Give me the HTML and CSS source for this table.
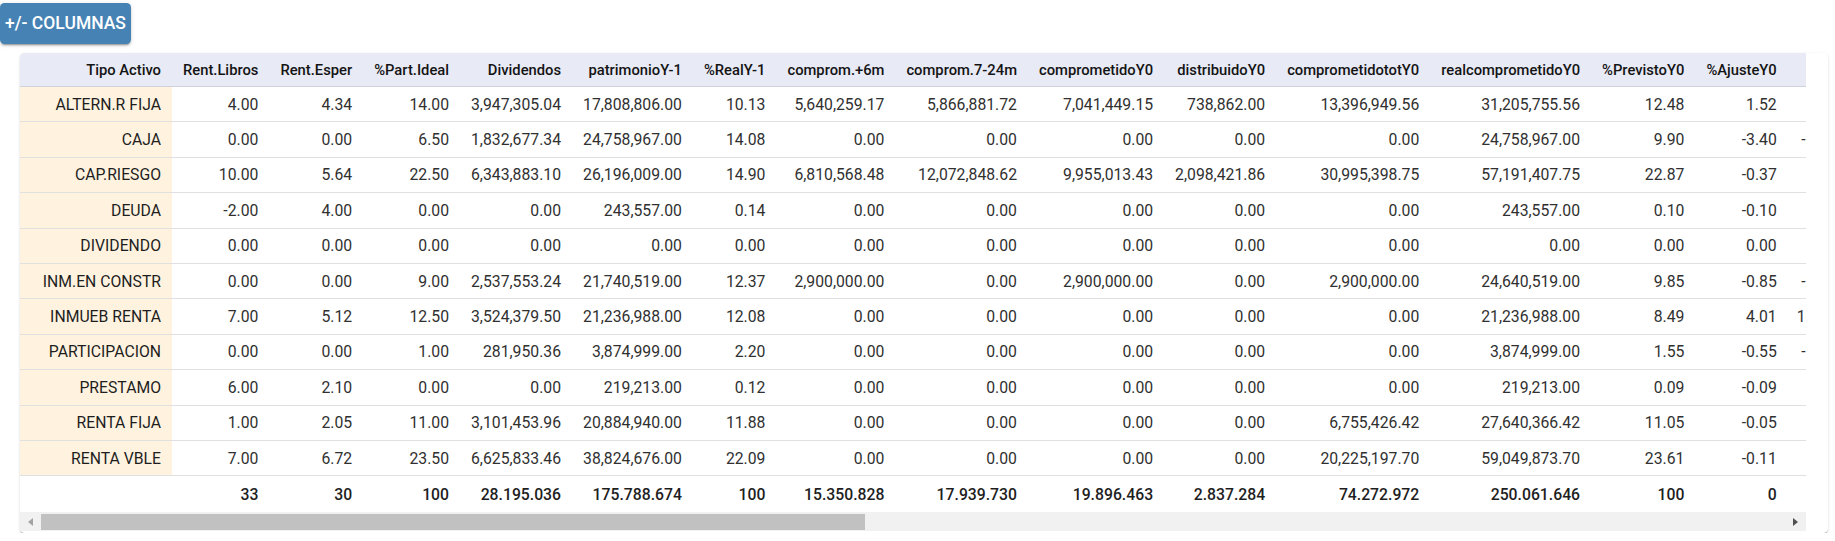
FILE: index.html
```html
<!DOCTYPE html>
<html lang="es">
<head>
<meta charset="utf-8">
<title>Tipo Activo</title>
<link rel="stylesheet" href="styles.css">
</head>
<body>
<div class="page">
  <button class="btn-cols" type="button">+/- Columnas</button>
  <div class="card">
    <div class="grid-scroll">
      <table class="grid">
        <thead>
          <tr>
            <th class="tipo-h">Tipo Activo</th><th>Rent.Libros</th><th>Rent.Esper</th><th>%Part.Ideal</th><th>Dividendos</th><th>patrimonioY-1</th><th>%RealY-1</th><th>comprom.+6m</th><th>comprom.7-24m</th><th>comprometidoY0</th><th>distribuidoY0</th><th>comprometidototY0</th><th>realcomprometidoY0</th><th>%PrevistoY0</th><th>%AjusteY0</th><th>ajusteY0</th><th>previstoY1</th><th>comprometidoY1</th><th>distribuidoY1</th><th>comprometidototY1</th><th>realcomprometidoY1</th><th>%PrevistoY1</th><th>%AjusteY1</th><th>ajusteY1</th><th>previstoY2</th><th>comprometidoY2</th><th>distribuidoY2</th><th>realcomprometidoY2</th><th>%PrevistoY2</th><th>%AjusteY2</th>
          </tr>
        </thead>
        <tbody>
          <tr><td class="tipo">ALTERN.R FIJA</td><td>4.00</td><td>4.34</td><td>14.00</td><td>3,947,305.04</td><td>17,808,806.00</td><td>10.13</td><td>5,640,259.17</td><td>5,866,881.72</td><td>7,041,449.15</td><td>738,862.00</td><td>13,396,949.56</td><td>31,205,755.56</td><td>12.48</td><td>1.52</td><td>3,812,440.12</td><td>33,412,980.00</td><td>4,120,000.00</td><td>812,748.20</td><td>9,276,949.56</td><td>35,325,755.56</td><td>12.90</td><td>1.10</td><td>2,887,215.40</td><td>34,102,700.00</td><td>2,600,000.00</td><td>894,023.02</td><td>36,130,412.14</td><td>13.10</td><td>0.90</td></tr>
          <tr><td class="tipo">CAJA</td><td>0.00</td><td>0.00</td><td>6.50</td><td>1,832,677.34</td><td>24,758,967.00</td><td>14.08</td><td>0.00</td><td>0.00</td><td>0.00</td><td>0.00</td><td>0.00</td><td>24,758,967.00</td><td>9.90</td><td>-3.40</td><td>-8,418,049.00</td><td>16,340,918.00</td><td>0.00</td><td>0.00</td><td>0.00</td><td>16,340,918.00</td><td>6.50</td><td>0.00</td><td>0.00</td><td>16,340,918.00</td><td>0.00</td><td>0.00</td><td>16,340,918.00</td><td>6.50</td><td>0.00</td></tr>
          <tr><td class="tipo">CAP.RIESGO</td><td>10.00</td><td>5.64</td><td>22.50</td><td>6,343,883.10</td><td>26,196,009.00</td><td>14.90</td><td>6,810,568.48</td><td>12,072,848.62</td><td>9,955,013.43</td><td>2,098,421.86</td><td>30,995,398.75</td><td>57,191,407.75</td><td>22.87</td><td>-0.37</td><td>-948,118.52</td><td>56,243,289.23</td><td>7,250,000.00</td><td>2,308,264.05</td><td>23,745,398.75</td><td>64,441,407.75</td><td>22.50</td><td>0.00</td><td>0.00</td><td>57,930,112.40</td><td>5,100,000.00</td><td>2,539,090.45</td><td>66,204,117.36</td><td>22.50</td><td>0.00</td></tr>
          <tr><td class="tipo">DEUDA</td><td>-2.00</td><td>4.00</td><td>0.00</td><td>0.00</td><td>243,557.00</td><td>0.14</td><td>0.00</td><td>0.00</td><td>0.00</td><td>0.00</td><td>0.00</td><td>243,557.00</td><td>0.10</td><td>-0.10</td><td>-24,355.70</td><td>0.00</td><td>0.00</td><td>0.00</td><td>0.00</td><td>219,201.30</td><td>0.00</td><td>0.00</td><td>0.00</td><td>0.00</td><td>0.00</td><td>0.00</td><td>197,281.17</td><td>0.00</td><td>0.00</td></tr>
          <tr><td class="tipo">DIVIDENDO</td><td>0.00</td><td>0.00</td><td>0.00</td><td>0.00</td><td>0.00</td><td>0.00</td><td>0.00</td><td>0.00</td><td>0.00</td><td>0.00</td><td>0.00</td><td>0.00</td><td>0.00</td><td>0.00</td><td>0.00</td><td>0.00</td><td>0.00</td><td>0.00</td><td>0.00</td><td>0.00</td><td>0.00</td><td>0.00</td><td>0.00</td><td>0.00</td><td>0.00</td><td>0.00</td><td>0.00</td><td>0.00</td><td>0.00</td></tr>
          <tr><td class="tipo">INM.EN CONSTR</td><td>0.00</td><td>0.00</td><td>9.00</td><td>2,537,553.24</td><td>21,740,519.00</td><td>12.37</td><td>2,900,000.00</td><td>0.00</td><td>2,900,000.00</td><td>0.00</td><td>2,900,000.00</td><td>24,640,519.00</td><td>9.85</td><td>-0.85</td><td>-2,093,144.10</td><td>22,547,374.90</td><td>0.00</td><td>0.00</td><td>0.00</td><td>22,547,374.90</td><td>9.00</td><td>0.00</td><td>0.00</td><td>22,547,374.90</td><td>0.00</td><td>0.00</td><td>22,547,374.90</td><td>9.00</td><td>0.00</td></tr>
          <tr><td class="tipo">INMUEB RENTA</td><td>7.00</td><td>5.12</td><td>12.50</td><td>3,524,379.50</td><td>21,236,988.00</td><td>12.08</td><td>0.00</td><td>0.00</td><td>0.00</td><td>0.00</td><td>0.00</td><td>21,236,988.00</td><td>8.49</td><td>4.01</td><td>10,188,355.21</td><td>31,425,343.21</td><td>0.00</td><td>0.00</td><td>0.00</td><td>31,425,343.21</td><td>12.50</td><td>0.00</td><td>0.00</td><td>31,425,343.21</td><td>0.00</td><td>0.00</td><td>31,425,343.21</td><td>12.50</td><td>0.00</td></tr>
          <tr><td class="tipo">PARTICIPACION</td><td>0.00</td><td>0.00</td><td>1.00</td><td>281,950.36</td><td>3,874,999.00</td><td>2.20</td><td>0.00</td><td>0.00</td><td>0.00</td><td>0.00</td><td>0.00</td><td>3,874,999.00</td><td>1.55</td><td>-0.55</td><td>-1,374,560.36</td><td>2,500,438.64</td><td>0.00</td><td>0.00</td><td>0.00</td><td>2,500,438.64</td><td>1.00</td><td>0.00</td><td>0.00</td><td>2,500,438.64</td><td>0.00</td><td>0.00</td><td>2,500,438.64</td><td>1.00</td><td>0.00</td></tr>
          <tr><td class="tipo">PRESTAMO</td><td>6.00</td><td>2.10</td><td>0.00</td><td>0.00</td><td>219,213.00</td><td>0.12</td><td>0.00</td><td>0.00</td><td>0.00</td><td>0.00</td><td>0.00</td><td>219,213.00</td><td>0.09</td><td>-0.09</td><td>-21,921.30</td><td>0.00</td><td>0.00</td><td>0.00</td><td>0.00</td><td>197,291.70</td><td>0.00</td><td>0.00</td><td>0.00</td><td>0.00</td><td>0.00</td><td>0.00</td><td>177,562.53</td><td>0.00</td><td>0.00</td></tr>
          <tr><td class="tipo">RENTA FIJA</td><td>1.00</td><td>2.05</td><td>11.00</td><td>3,101,453.96</td><td>20,884,940.00</td><td>11.88</td><td>0.00</td><td>0.00</td><td>0.00</td><td>0.00</td><td>6,755,426.42</td><td>27,640,366.42</td><td>11.05</td><td>-0.05</td><td>-12,454.06</td><td>27,627,912.36</td><td>0.00</td><td>0.00</td><td>6,755,426.42</td><td>27,627,912.36</td><td>11.00</td><td>0.00</td><td>0.00</td><td>27,627,912.36</td><td>0.00</td><td>0.00</td><td>27,627,912.36</td><td>11.00</td><td>0.00</td></tr>
          <tr><td class="tipo">RENTA VBLE</td><td>7.00</td><td>6.72</td><td>23.50</td><td>6,625,833.46</td><td>38,824,676.00</td><td>22.09</td><td>0.00</td><td>0.00</td><td>0.00</td><td>0.00</td><td>20,225,197.70</td><td>59,049,873.70</td><td>23.61</td><td>-0.11</td><td>-26,905.90</td><td>59,022,967.80</td><td>0.00</td><td>0.00</td><td>20,225,197.70</td><td>59,022,967.80</td><td>23.50</td><td>0.00</td><td>0.00</td><td>59,022,967.80</td><td>0.00</td><td>0.00</td><td>59,022,967.80</td><td>23.50</td><td>0.00</td></tr>
        </tbody>
        <tfoot>
          <tr><td></td><td>33</td><td>30</td><td>100</td><td>28.195.036</td><td>175.788.674</td><td>100</td><td>15.350.828</td><td>17.939.730</td><td>19.896.463</td><td>2.837.284</td><td>74.272.972</td><td>250.061.646</td><td>100</td><td>0</td><td>0</td><td>249.120.264</td><td>11.370.000</td><td>3.121.012</td><td>60.002.972</td><td>259.250.590</td><td>100</td><td>1</td><td>2.887.215</td><td>251.497.767</td><td>7.700.000</td><td>3.433.113</td><td>262.172.215</td><td>100</td><td>1</td></tr>
        </tfoot>
      </table>
    </div>
    <div class="hscroll" aria-hidden="true">
      <span class="hs-btn hs-left"></span>
      <div class="hs-track"><div class="hs-thumb"></div></div>
      <span class="hs-btn hs-right"></span>
    </div>
  </div>
</div>
</body>
</html>
```

FILE: styles.css
```css
html, body {
  margin: 0;
  padding: 0;
  background: #ffffff;
  font-family: Roboto, "Liberation Sans", Arial, sans-serif;
}

.page {
  padding-top: 3px;
}

.btn-cols {
  display: block;
  height: 40.5px;
  min-width: 131px;
  padding: 0 5px;
  margin: 0;
  border: none;
  border-radius: 4.5px;
  background: #4682b4;
  color: #ffffff;
  font-family: Roboto, "Liberation Sans", Arial, sans-serif;
  font-size: 17.5px;
  font-weight: 500;
  text-transform: uppercase;
  box-shadow: 0 3px 1px -2px rgba(0,0,0,.2), 0 2px 2px 0 rgba(0,0,0,.14), 0 1px 5px 0 rgba(0,0,0,.12);
  cursor: pointer;
}

.card {
  margin: 9.5px 7px 0 20px;
  padding: 0 22px 2px 0;
  background: #ffffff;
  border-radius: 4.5px;
  box-shadow: 0 2px 1px -1px rgba(0,0,0,.2), 0 1px 1px 0 rgba(0,0,0,.14), 0 1px 3px 0 rgba(0,0,0,.12);
}

.grid-scroll {
  overflow: hidden;
  border-top-left-radius: 4.5px;
}

.grid {
  border-collapse: separate;
  border-spacing: 0;
  font-size: 15.75px;
  color: #303030;
}

.grid th,
.grid td {
  box-sizing: border-box;
  padding: 0 11px;
  text-align: right;
  white-space: nowrap;
  vertical-align: middle;
}

.grid tr > :nth-child(16) {
  padding-left: 9px;
}

.grid th {
  height: 34px;
  background: #e8eaf6;
  color: #141414;
  font-size: 14.75px;
  font-weight: 500;
  border-bottom: 1px solid #cfd1dc;
}

.grid th.tipo-h {
  min-width: 152px;
}

.grid tbody td {
  height: 35.4px;
  border-bottom: 1px solid #e0e0e0;
}

.grid tbody td.tipo {
  background: #fff3e0;
  color: #1e1e1e;
}

.grid tfoot td {
  height: 36px;
  font-weight: 500;
  color: #1e1e1e;
}

.hscroll {
  display: flex;
  height: 19px;
  background: #f1f1f1;
}

.hs-btn {
  flex: none;
  width: 21px;
  display: flex;
  align-items: center;
  justify-content: center;
}

.hs-btn::before {
  content: "";
  width: 0;
  height: 0;
  border-style: solid;
}

.hs-left::before {
  border-width: 4.5px 5px 4.5px 0;
  border-color: transparent #a3a3a3 transparent transparent;
}

.hs-right::before {
  border-width: 4.5px 0 4.5px 5px;
  border-color: transparent transparent transparent #505050;
}

.hs-track {
  flex: 1;
  box-sizing: border-box;
  padding: 2px 0 1px;
}

.hs-thumb {
  width: 47.25%;
  height: 100%;
  background: #c1c1c1;
}
```
